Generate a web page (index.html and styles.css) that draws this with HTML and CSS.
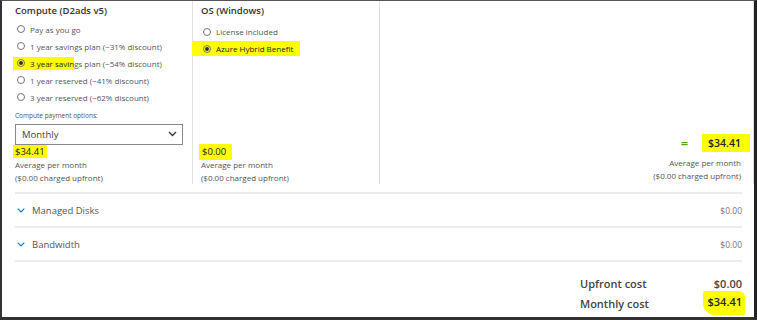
FILE: index.html
```html
<!DOCTYPE html>
<html lang="en">

<head>
    <meta charset="UTF-8">
    <title>Pricing Calculator</title>
    <link rel="stylesheet" href="styles.css">
</head>

<body>

    <div class="frame">
        <section class="top">
            <div class="col compute">
                <h3>Compute (D2ads v5)</h3>
                <ul class="radios">
                    <li><span class="radio"></span>Pay as you go</li>
                    <li><span class="radio"></span>1 year savings plan (~31% discount)</li>
                    <li><span class="hl hl-plan"><span class="radio checked"></span>3 year savin</span>gs plan (~54% discount)</li>
                    <li><span class="radio"></span>1 year reserved (~41% discount)</li>
                    <li><span class="radio"></span>3 year reserved (~62% discount)</li>
                </ul>
                <div class="sub-label">Compute payment options:</div>
                <div class="select">
                    <span>Monthly</span>
                    <svg width="9" height="6" viewBox="0 0 9 6"><path d="M1 1 L4.5 4.5 L8 1" fill="none" stroke="#333" stroke-width="1.3"/></svg>
                </div>
                <div class="price"><span class="hl">$34.41</span></div>
                <div class="note">Average per month</div>
                <div class="note">($0.00 charged upfront)</div>
            </div>

            <div class="col os">
                <h3>OS (Windows)</h3>
                <ul class="radios">
                    <li><span class="radio"></span>License included</li>
                    <li><span class="hl hl-os"><span class="radio checked"></span>Azure Hybrid Benefit</span></li>
                </ul>
                <div class="bottom">
                    <div class="price"><span class="hl hl-zero">$0.00</span></div>
                    <div class="note">Average per month</div>
                    <div class="note">($0.00 charged upfront)</div>
                </div>
            </div>

            <div class="col total">
                <div class="bottom">
                    <div class="total-price"><span class="eq">=</span><span class="hl hl-total">$34.41</span></div>
                    <div class="note">Average per month</div>
                    <div class="note">($0.00 charged upfront)</div>
                </div>
            </div>
        </section>

        <section class="rows">
            <div class="row">
                <svg class="chev" width="8" height="5" viewBox="0 0 8 5"><path d="M0.7 0.7 L4 4 L7.3 0.7" fill="none" stroke="#0078d4" stroke-width="1.1"/></svg>
                <span class="row-name">Managed Disks</span>
                <span class="amt">$0.00</span>
            </div>
            <div class="row">
                <svg class="chev" width="8" height="5" viewBox="0 0 8 5"><path d="M0.7 0.7 L4 4 L7.3 0.7" fill="none" stroke="#0078d4" stroke-width="1.1"/></svg>
                <span class="row-name">Bandwidth</span>
                <span class="amt">$0.00</span>
            </div>
        </section>

        <section class="summary">
            <div class="sum-line"><span>Upfront cost</span><span>$0.00</span></div>
            <div class="sum-line"><span>Monthly cost</span><span class="hl hl-month">$34.41</span></div>
        </section>
    </div>

</body>

</html>
```

FILE: styles.css
```css
/* Global Styles */
* {
    margin: 0;
    padding: 0;
    box-sizing: border-box;
}

body {
    font-family: 'Open Sans', 'Noto Sans', sans-serif;
    background-color: #fff;
    color: #555;
}

.frame {
    width: 757px;
    height: 320px;
    border-top: 1px solid #555;
    border-left: 2px solid #333;
    border-right: 3px solid #222;
    border-bottom: 3px solid #333;
    display: flex;
    flex-direction: column;
}

/* Yellow marker */
.hl {
    background-color: #ffff00;
    color: #222;
}

/* Top columns */
.top {
    display: flex;
    height: 183px;
}

.col {
    display: flex;
    flex-direction: column;
    padding-top: 4px;
}

.compute {
    width: 191px;
    padding-left: 13px;
    border-right: 1px solid #e1e1e1;
}

.os {
    width: 187px;
    padding-left: 8px;
    border-right: 1px solid #e1e1e1;
}

.total {
    flex: 1;
    padding-right: 12px;
    align-items: flex-end;
    border-right: 1px solid #ddd;
}

.col h3 {
    font-size: 9.5px;
    font-weight: 600;
    color: #333;
    height: 18px;
    line-height: 12px;
}

.radios {
    list-style: none;
}

.radios li {
    display: flex;
    align-items: center;
    height: 17px;
    font-size: 8px;
    color: #555;
}

.radio {
    width: 8px;
    height: 8px;
    border: 1px solid #777;
    border-radius: 50%;
    margin-left: 2px;
    margin-right: 5px;
    flex-shrink: 0;
    display: inline-flex;
    align-items: center;
    justify-content: center;
}

.radio.checked::after {
    content: "";
    width: 4px;
    height: 4px;
    border-radius: 50%;
    background-color: #333;
}

.hl-plan {
    display: inline-flex;
    align-items: center;
    margin-left: -2px;
    padding: 1px 0 1px 2px;
}

.hl-os {
    display: inline-flex;
    align-items: center;
    margin-left: -9px;
    padding: 2px 7px 2px 9px;
}

.sub-label {
    font-size: 6.5px;
    color: #555;
    margin-top: 5px;
}

.select {
    width: 168px;
    height: 24px;
    margin-top: 4px;
    border: 1px solid #888;
    display: flex;
    align-items: center;
    justify-content: space-between;
    padding: 0 5px 0 6px;
    font-size: 9.5px;
    color: #444;
}

.price {
    font-size: 9.5px;
    line-height: 13px;
}

.price .hl {
    padding: 0 2px;
    margin-left: -2px;
}

.hl-zero {
    padding: 1px 6px 2px 3px !important;
}

.note {
    font-size: 8px;
    line-height: 13px;
    color: #555;
}

.bottom {
    margin-top: auto;
}

.total .bottom {
    text-align: right;
    padding-bottom: 2px;
}

.total-price {
    display: flex;
    align-items: center;
    justify-content: flex-end;
    margin-bottom: 4px;
}

.eq {
    color: #57a300;
    font-size: 13px;
    font-weight: 600;
    margin-right: 14px;
}

.hl-total {
    font-size: 10.5px;
    font-weight: 600;
    padding: 2px 9px 2px 6px;
    margin-right: -9px;
}

/* Expandable rows */
.rows {
    margin: 8px 12px 0 13px;
    border-top: 2px solid #ececec;
}

.row {
    display: flex;
    align-items: center;
    height: 34px;
    border-bottom: 2px solid #ececec;
}

.chev {
    margin: 0 7px 0 2px;
}

.row-name {
    font-size: 9.5px;
    color: #555;
}

.amt {
    margin-left: auto;
    font-size: 8.5px;
    color: #777;
}

/* Summary */
.summary {
    margin: 11px 12px 0 auto;
    width: 162px;
}

.sum-line {
    display: flex;
    justify-content: space-between;
    align-items: center;
    height: 20px;
    font-size: 11px;
    font-weight: 600;
    color: #444;
}

.hl-month {
    padding: 3px 3px 6px 5px;
    border-radius: 2px 6px 2px 12px;
    margin-right: -3px;
}
```
